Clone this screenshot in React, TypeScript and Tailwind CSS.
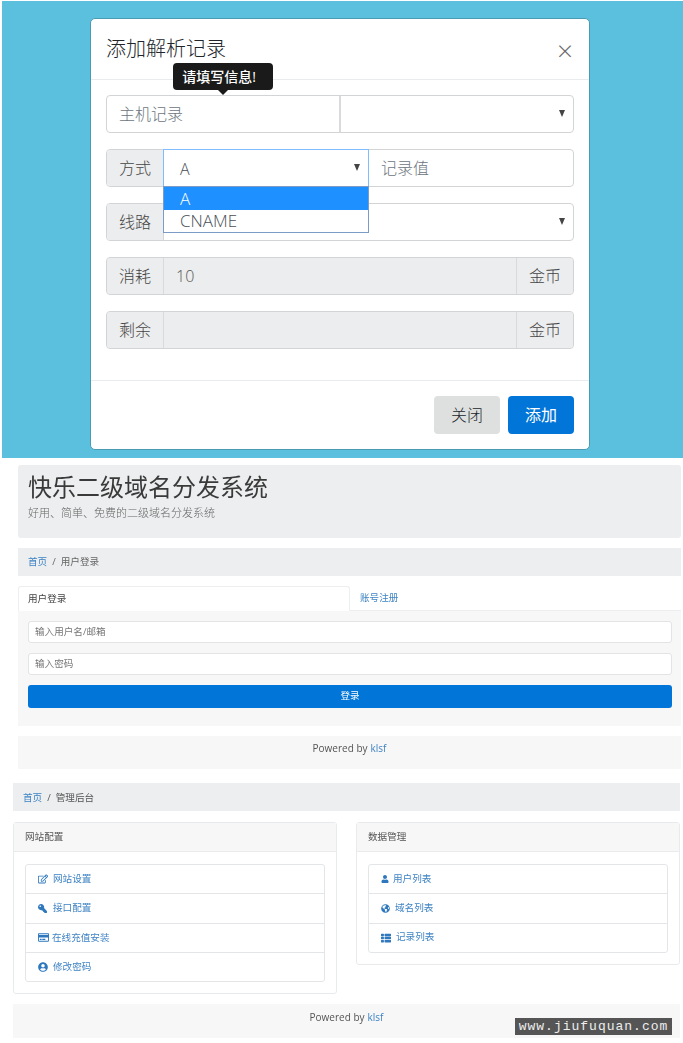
import { FaGlobeAmericas, FaKey, FaRegCreditCard, FaRegEdit, FaThList, FaUser, FaUserCircle } from "react-icons/fa";
import type { ReactNode } from "react";

const cjk = "font-['Open_Sans','Noto_Sans_CJK_SC',sans-serif]";

function Addon({ children, className = "" }: { children: ReactNode; className?: string }) {
  return (
    <div className={`flex w-[57px] shrink-0 items-center justify-center bg-[#ecedee] text-[16px] font-light text-[#444] ${className}`}>
      {children}
    </div>
  );
}

function Caret() {
  return <span className="absolute right-[8px] top-[14px] h-0 w-0 border-x-[3px] border-t-[7px] border-x-transparent border-t-[#444]" />;
}

function MenuLink({ icon, label, gap = "gap-[5px]" }: { icon: ReactNode; label: string; gap?: string }) {
  return (
    <div className={`flex h-[29.33px] items-center border-b border-[#e3e5e8] pl-[12px] text-[9.6px] text-[#3f83c4] last:h-[28px] last:border-b-0 ${gap}`}>
      <span className="text-[#2f78bd]">{icon}</span>
      {label}
    </div>
  );
}

function Panel({ title, children }: { title: string; children: ReactNode }) {
  return (
    <div className="w-[324px] rounded-[3px] border border-[#e8eaec]">
      <div className="flex h-[29px] items-center border-b border-[#e8eaec] bg-[#f7f7f7] pl-[11px] text-[9.6px] text-[#555]">{title}</div>
      <div className="px-[11px] pb-[11px] pt-[12px]">
        <div className="rounded-[3px] border border-[#e3e5e8]">{children}</div>
      </div>
    </div>
  );
}

export default function App() {
  return (
    <div className={`relative h-[1043px] w-[683px] overflow-hidden bg-white ${cjk}`}>
      {/* modal screenshot */}
      <div className="ml-[2px] mt-px h-[457px] bg-[#5bc0de] pl-[88px] pt-[17px]">
        <div className="h-[432px] w-[500px] rounded-[5px] border border-[#4a9ab3] bg-white">
          <div className="flex h-[61px] items-center justify-between border-b border-[#e9ecef] pl-[15px] pr-[16px]">
            <span className="text-[20px] font-light leading-[24px] text-[#212529]">添加解析记录</span>
            <span className="mt-[2px] text-[28px] font-light leading-none text-[#666]">×</span>
          </div>

          <div className="relative flex h-[300px] flex-col gap-[16px] px-[15px] pt-[15px]">
            {/* tooltip */}
            <div className="absolute left-[82px] top-[-17px] flex h-[27px] w-[100px] items-center justify-center rounded-[4px] bg-[#1a1a1a] pr-[8px] text-[14px] font-medium text-white">
              请填写信息!
              <span className="absolute bottom-[-5px] left-[45px] h-0 w-0 border-x-[5px] border-t-[5px] border-x-transparent border-t-[#1a1a1a]" />
            </div>

            <div className="flex h-[38px] rounded-[4px] border border-[#d2d4d6]">
              <div className="flex w-[234px] items-center border-r-2 border-[#d8dadc] pl-[12px] text-[16px] font-light text-[#6c757d]">主机记录</div>
              <div className="relative flex-1"><Caret /></div>
            </div>

            <div className="relative flex h-[38px] rounded-[4px] border border-[#d2d4d6]">
              <Addon className="rounded-l-[3px] border-r border-[#d2d4d6]">方式</Addon>
              <div className="relative -my-px -ml-px flex w-[206px] items-center border border-[#80bdff] pl-[16px] pt-px text-[16px] font-light text-[#495057]">
                A
                <Caret />
              </div>
              <div className="flex flex-1 items-center pl-[12px] text-[16px] font-light text-[#6c757d]">记录值</div>
              {/* open select list */}
              <div className="absolute left-[56px] top-[36px] z-10 w-[206px] border border-[#7a9cc6] bg-white text-[17px] font-light">
                <div className="h-[23px] bg-[#1e90ff] pl-[16px] leading-[24px] text-white">A</div>
                <div className="h-[22px] pl-[16px] leading-[21px] text-[#495057]">CNAME</div>
              </div>
            </div>

            <div className="flex h-[38px] rounded-[4px] border border-[#d2d4d6]">
              <Addon className="rounded-l-[3px] border-r border-[#d2d4d6]">线路</Addon>
              <div className="relative flex-1"><Caret /></div>
            </div>

            <div className="flex h-[38px] rounded-[4px] border border-[#d2d4d6] bg-[#ecedee]">
              <Addon className="rounded-l-[3px] border-r border-[#d8dadc]">消耗</Addon>
              <div className="flex flex-1 items-center pl-[12px] text-[16px] font-light text-[#555]">10</div>
              <Addon className="rounded-r-[3px] border-l border-[#d8dadc]">金币</Addon>
            </div>

            <div className="flex h-[38px] rounded-[4px] border border-[#d2d4d6] bg-[#ecedee]">
              <Addon className="rounded-l-[3px] border-r border-[#d8dadc]">剩余</Addon>
              <div className="flex-1" />
              <Addon className="rounded-r-[3px] border-l border-[#d8dadc]">金币</Addon>
            </div>
          </div>

          <div className="flex h-[69px] items-center justify-end gap-[8px] border-t border-[#e9ecef] pr-[15px]">
            <div className="flex h-[38px] w-[66px] items-center justify-center rounded-[4px] bg-[#dee0e0] text-[16px] font-light text-[#212529]">关闭</div>
            <div className="flex h-[38px] w-[66px] items-center justify-center rounded-[4px] bg-[#0275d8] text-[16px] font-normal text-white">添加</div>
          </div>
        </div>
      </div>

      {/* login page */}
      <div className="ml-[18px] mt-[7px] w-[663px] blur-[0.5px]">
        <div className="h-[73px] rounded-[3px] bg-[#eceeef] pl-[10px] pt-[7px]">
          <div className="text-[24px] font-normal leading-[30px] text-[#3a3a3a]">快乐二级域名分发系统</div>
          <div className="mt-[3px] text-[11px] font-light leading-[16px] text-[#666]">好用、简单、免费的二级域名分发系统</div>
        </div>

        <div className="mt-[10px] flex h-[28px] items-center gap-[5px] bg-[#eceeef] pl-[10px] pt-px text-[9.6px] text-[#666]">
          <span className="text-[#3f83c4]">首页</span>
          <span>/</span>
          <span>用户登录</span>
        </div>

        <div className="mt-[10px] flex h-[25px] text-[9.6px]">
          <div className="flex w-[332px] items-center rounded-t-[3px] border border-b-0 border-[#eceeef] pl-[9px] text-[#444]">用户登录</div>
          <div className="flex flex-1 items-center border-b border-[#eceeef] pl-[10px] text-[#3f83c4]">账号注册</div>
        </div>
        <div className="flex h-[115px] flex-col gap-[10px] bg-[#f7f7f7] pl-[10px] pr-[9px] pt-[10px]">
          <div className="flex h-[22px] items-center rounded-[3px] border border-[#e2e4e6] bg-white pl-[6px] text-[9.6px] text-[#777]">输入用户名/邮箱</div>
          <div className="flex h-[22px] items-center rounded-[3px] border border-[#e2e4e6] bg-white pl-[6px] text-[9.6px] text-[#777]">输入密码</div>
          <div className="flex h-[23px] items-center justify-center rounded-[3px] bg-[#0275d8] text-[9.6px] text-white">登录</div>
        </div>

        <div className="mt-[10px] flex h-[33px] items-start justify-center gap-[3px] bg-[#f7f7f7] pt-[5px] text-[10px] text-[#555]">
          Powered by <span className="text-[#3f83c4]">klsf</span>
        </div>
      </div>

      {/* admin page */}
      <div className="ml-[13px] mt-[14px] w-[667px] blur-[0.6px]">
        <div className="flex h-[28px] items-center gap-[5px] bg-[#eceeef] pl-[10px] pt-[2px] text-[9.6px] text-[#555]">
          <span className="text-[#3f83c4]">首页</span>
          <span>/</span>
          <span>管理后台</span>
        </div>

        <div className="mt-[11px] flex items-start gap-[19px]">
          <Panel title="网站配置">
            <MenuLink icon={<FaRegEdit size={10} />} label="网站设置" />
            <MenuLink icon={<FaKey size={9} className="-scale-x-100" />} label="接口配置" gap="gap-[6px]" />
            <MenuLink icon={<FaRegCreditCard size={11} />} label="在线充值安装" gap="gap-[3px]" />
            <MenuLink icon={<FaUserCircle size={10} />} label="修改密码" />
          </Panel>
          <Panel title="数据管理">
            <MenuLink icon={<FaUser size={8} />} label="用户列表" gap="gap-[4px]" />
            <MenuLink icon={<FaGlobeAmericas size={9} />} label="域名列表" />
            <MenuLink icon={<FaThList size={10} />} label="记录列表" />
          </Panel>
        </div>

        <div className="mt-[10px] flex h-[34px] items-start justify-center gap-[3px] bg-[#f7f7f7] pt-[6px] text-[10px] text-[#555]">
          Powered by <span className="text-[#3f83c4]">klsf</span>
        </div>
      </div>

      {/* watermark */}
      <div className="absolute left-[515px] top-[1018px] flex h-[17px] w-[157px] items-center justify-center bg-[#555] font-['Liberation_Mono',monospace] text-[13px] leading-none tracking-[1px] text-[#eee]">
        www.jiufuquan.com
      </div>
    </div>
  );
}
